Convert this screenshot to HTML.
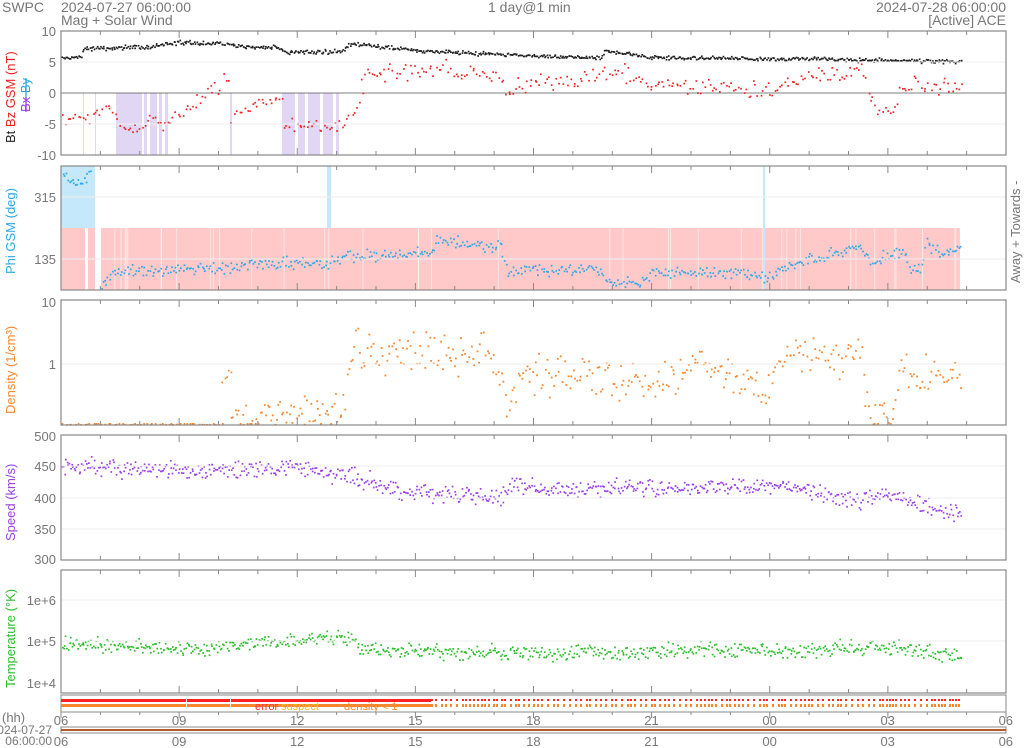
<!DOCTYPE html>
<html><head><meta charset="utf-8"><style>
html,body{margin:0;padding:0;background:#fff;width:1024px;height:748px;overflow:hidden}
svg{display:block;font-family:"Liberation Sans","DejaVu Sans",sans-serif}
</style></head><body>
<svg id="s" width="1024" height="748" viewBox="0 0 1024 748" xmlns="http://www.w3.org/2000/svg">
<g font-size="14" fill="#777">
<text x="2" y="12">SWPC</text>
<text x="61" y="12">2024-07-27 06:00:00</text>
<text x="61" y="25">Mag + Solar Wind</text>
<text x="488" y="12">1 day@1 min</text>
<text x="1006" y="12" text-anchor="end">2024-07-28 06:00:00</text>
<text x="1006" y="25" text-anchor="end">[Active] ACE</text>
</g>
<g id="g"></g>
</svg>
<script>
var G=document.getElementById('g'),h='';
var seed=7;function r(){seed=(seed*16807)%2147483647;return seed/2147483647;}
function rn(){return (r()+r()+r()-1.5)*1.2;}
var X0=61,X1=1006;
function rect(x,y,w,hh,c,o){h+='<rect x="'+x+'" y="'+y+'" width="'+w+'" height="'+hh+'" fill="'+c+'"'+(o?' opacity="'+o+'"':'')+'/>';}
function txt(x,y,t,c,a,fs){h+='<text x="'+x+'" y="'+y+'" fill="'+c+'" font-size="'+(fs||13)+'"'+(a?' text-anchor="'+a+'"':'')+'>'+t+'</text>';}
function interp(pts,x){for(var i=0;i<pts.length-1;i++){if(x>=pts[i][0]&&x<=pts[i+1][0]){var t=(x-pts[i][0])/(pts[i+1][0]-pts[i][0]);return pts[i][1]+t*(pts[i+1][1]-pts[i][1]);}}return null;}
function scatter(pts,noise,col,step,sz,yt,yb){var x0=pts[0][0],x1=pts[pts.length-1][0];for(var x=x0;x<=x1;x+=step){var v=interp(pts,x);if(v===null)continue;var y=v+rn()*noise;if(y<yt)y=yt+1;if(y>yb-1)y=yb-2;h+='<rect x="'+(x+r()*step).toFixed(1)+'" y="'+y.toFixed(1)+'" width="'+sz+'" height="'+sz+'" fill="'+col+'"/>';}}
function frame(yt,yb,grids){for(var i=0;i<grids.length;i++)h+='<line x1="'+X0+'" x2="'+X1+'" y1="'+grids[i]+'" y2="'+grids[i]+'" stroke="#eee"/>';
 for(var k=0;k<=24;k++){var x=X0+k*(X1-X0)/24,L=(k%3==0)?7:4;h+='<line x1="'+x+'" x2="'+x+'" y1="'+yt+'" y2="'+(yt+L)+'" stroke="#888"/><line x1="'+x+'" x2="'+x+'" y1="'+yb+'" y2="'+(yb-L)+'" stroke="#888"/>';}
 h+='<rect x="'+X0+'" y="'+yt+'" width="'+(X1-X0)+'" height="'+(yb-yt)+'" fill="none" stroke="#888" stroke-width="1.2"/>';}
[[83,84],[95,96],[116,142],[144,147],[150,157],[159,162],[165,168],[230,232],[282,295],[298,305],[308,320],[323,333],[336,339]].forEach(function(a){rect(a[0],93,a[1]-a[0],62,'#dcd0f2',0.85);});
h+='<line x1="61" x2="1006" y1="93" y2="93" stroke="#555" stroke-width="0.8"/>';
scatter([[61,57],[80,56],[82,48],[150,46],[170,42],[230,43],[240,46],[280,47],[285,52],[340,51],[350,43],[420,50],[500,54],[600,57],[605,50],[620,52],[650,57],[760,58],[800,58],[960,61]],1.6,'#222',1.2,1.7,31,155);
scatter([[61,118],[100,115],[108,105],[115,120],[120,126],[140,126],[150,118],[160,125],[200,100],[220,82],[228,74]],6,'#e22',2.5,1.7,31,155);
scatter([[230,120],[232,112],[280,96],[282,124],[340,125],[360,98]],5,'#e22',2.5,1.7,31,155);
scatter([[360,75],[440,68],[500,78],[505,95],[520,82],[600,78],[610,70],[650,82],[700,88],[760,92],[800,75],[860,70],[870,100],[890,118],[900,85],[960,85]],8,'#e22',2.4,1.7,40,155);
frame(31,155,[62,124]);
rect(61,166,34,62,'#c5e8fb');rect(61,228,899,62,'#ffc9c9');
rect(95,228,6,62,'#fff');rect(85,228,3,62,'#fff');
for(var i=0;i<40;i++){var x=100+r()*860;rect(x,228,1,62,'#fff',0.5);}
rect(327,166,4,62,'#c5e8fb');rect(763,166,2,124,'#c5e8fb');
scatter([[62,175],[80,185],[90,168]],4,'#2aa8e8',1.5,1.7,166,290);
scatter([[100,287],[110,272],[200,268],[290,262],[300,262],[330,262],[340,255],[430,252],[435,240],[500,247],[505,270],[600,268],[605,282],[640,282],[650,272],[740,272],[760,278],[800,262],[860,245],[870,262],[900,250],[910,268],[920,270],[925,242],[940,255],[960,248]],5,'#2aa8e8',1.6,1.7,166,290);
frame(166,290,[197,259]);
scatter([[61,424],[220,424]],0.3,'#f7882f',3,1.7,300,425);
scatter([[221,380],[230,370]],10,'#f7882f',2,1.7,300,425);
scatter([[230,418],[340,410],[355,330],[360,358],[440,350],[480,345],[500,375],[505,405],[520,375],[600,375],[650,385],[700,368],[750,380],[760,405],[780,355],[840,360],[850,350],[860,352],[865,405],[890,420],[900,370],[960,378]],17,'#f7882f',1.8,1.8,300,425);
frame(300,425,[364]);
scatter([[61,465],[200,470],[300,467],[350,476],[400,490],[500,497],[510,485],[580,490],[620,487],[700,487],[760,487],[780,485],[850,500],[900,495],[920,505],[960,512]],7,'#9a40e8',1.2,1.7,435,560);
frame(435,560,[466,498,529]);
scatter([[61,643],[200,648],[300,640],[350,636],[360,648],[500,652],[600,652],[700,650],[800,650],[880,645],[960,656]],6,'#2bbf2b',1.2,1.7,570,693);
frame(570,693,[600,641]);
h+='<rect x="61" y="695" width="945" height="17" fill="#fff" stroke="#888"/>';
rect(61,699,370,3,'#f22');rect(61,704,370,3,'#f7882f');
for(var x=431;x<960;x+=3+Math.floor(r()*4)){rect(x,699,2,2,'#f22');rect(x,704,2,3,'#f7882f');}
rect(186,698,1,10,'#fff');rect(230,698,1,10,'#fff');
h+='<text x="255" y="710" font-size="11" fill="#f33">error</text><text x="281" y="710" font-size="11" fill="#e8c020">suspect</text><text x="344" y="710" font-size="11" fill="#f7882f">density &lt; 1</text>';
var lbl=['06','09','12','15','18','21','00','03','06'];
for(var k=0;k<9;k++){var x=X0+k*118.1;txt(x,725,lbl[k],'#777','middle');txt(x,746,lbl[k],'#777','middle');}
for(var k=0;k<=24;k++){var x=X0+k*(X1-X0)/24;h+='<line x1="'+x+'" x2="'+x+'" y1="712" y2="'+(k%3==0?718:715)+'" stroke="#888"/>';}
h+='<rect x="61" y="727" width="945" height="6" fill="none" stroke="#888"/>';rect(61,729,945,2,'#b55a2a');
txt(2,722,'(hh)','#777');txt(52,734,'2024-07-27','#777','end',12);txt(52,745,'06:00:00','#777','end',12);
function yl(y,t){txt(56,y+5,t,'#777','end');}
yl(31,'10');yl(62,'5');yl(93,'0');yl(124,'-5');yl(155,'-10');
yl(197,'315');yl(259,'135');yl(302,'10');yl(364,'1');
yl(436,'500');yl(466,'450');yl(498,'400');yl(529,'350');yl(559,'300');
yl(600,'1e+6');yl(641,'1e+5');yl(683,'1e+4');
h+='<text transform="translate(15,143) rotate(-90)" font-size="13"><tspan fill="#222">Bt  </tspan><tspan fill="#e22">Bz GSM (nT)</tspan></text>';
h+='<text transform="translate(30,112) rotate(-90)" font-size="13"><tspan fill="#9a40e8" text-decoration="line-through">Bx</tspan><tspan fill="#2aa8e8" text-decoration="line-through"> By</tspan></text>';
h+='<text transform="translate(15,274) rotate(-90)" font-size="13" fill="#2aa8e8">Phi GSM (deg)</text>';
h+='<text transform="translate(15,414) rotate(-90)" font-size="13" fill="#f7882f">Density (1/cm³)</text>';
h+='<text transform="translate(15,541) rotate(-90)" font-size="13" fill="#9a40e8">Speed (km/s)</text>';
h+='<text transform="translate(15,688) rotate(-90)" font-size="13" fill="#2bbf2b">Temperature (°K)</text>';
h+='<text transform="translate(1020,283) rotate(-90)" font-size="13" fill="#777">Away +   Towards -</text>';
G.innerHTML=h;
</script>
</body></html>
